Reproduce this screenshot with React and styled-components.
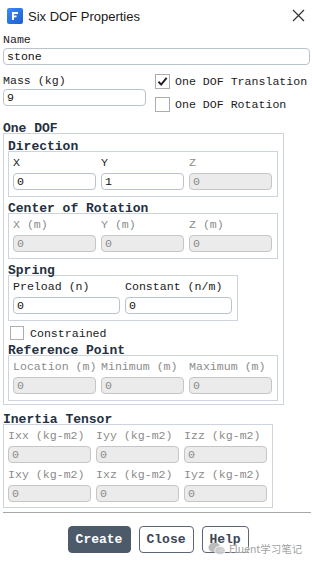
import styled, { createGlobalStyle } from "styled-components";

const Global = createGlobalStyle`
  html, body { margin: 0; padding: 0; background: #fff; }
  body { font-family: "Liberation Mono", "Courier New", monospace; }
`;

const Window = styled.div`
  position: relative;
  width: 312px;
  height: 563px;
  background: #fff;
  overflow: hidden;
`;

const TitleBar = styled.div`
  height: 31px;
  display: flex;
  align-items: center;
  padding: 0 7px;
  gap: 5px;
  box-sizing: border-box;
`;

const Title = styled.div`
  flex: 1;
  font-family: "Liberation Sans", Arial, sans-serif;
  font-size: 13px;
  color: #1a1a1a;
  padding-top: 1px;
`;

const Body = styled.div`
  padding: 1px 1px 0 3px;
`;

const Label = styled.div`
  height: 16px;
  line-height: 16px;
  font-size: 11.6px;
  color: ${(p) => (p.$disabled ? "#8c8c8c" : "#1c1c1c")};
  white-space: nowrap;
`;

const SectionTitle = styled.div`
  height: 11px;
  line-height: 13px;
  font-size: 13px;
  font-weight: bold;
  color: #24303f;
  margin-top: ${(p) => p.$top || 0}px;
  white-space: nowrap;
`;

const Input = styled.input`
  display: block;
  box-sizing: border-box;
  width: ${(p) => (p.$w ? p.$w + "px" : "100%")};
  height: 17px;
  margin: ${(p) => p.$mt || 0}px 0 0;
  padding: 0 3px;
  border: 1px solid ${(p) => (p.disabled ? "#c6c6c6" : "#b9c2ce")};
  border-radius: 4px;
  background: ${(p) => (p.disabled ? "#ebebeb" : "#fff")};
  color: ${(p) => (p.disabled ? "#8c8c8c" : "#111")};
  font-family: "Liberation Mono", monospace;
  font-size: 11.6px;
  outline: none;
`;

const MassRow = styled.div`
  display: flex;
  margin-top: 8px;
`;

const MassCol = styled.div`
  width: 143px;
`;

const Checks = styled.div`
  margin-left: 9px;
  margin-top: -3px;
  display: flex;
  flex-direction: column;
`;

const CheckRow = styled.label`
  display: flex;
  align-items: center;
  height: ${(p) => p.$h || 23}px;
  margin-top: ${(p) => p.$mt || 0}px;
  gap: ${(p) => p.$gap || 5}px;
  font-size: 11.6px;
  color: #1c1c1c;
  white-space: nowrap;
`;

const Box = styled.span`
  width: ${(p) => p.$size}px;
  height: ${(p) => p.$size}px;
  box-sizing: border-box;
  border: 1px solid #adadad;
  background: #fff;
  display: flex;
  align-items: center;
  justify-content: center;
  margin-left: ${(p) => p.$ml || 0}px;
`;

const Group = styled.div`
  box-sizing: border-box;
  width: ${(p) => p.$w}px;
  border: 1px solid #cdd4de;
  padding: ${(p) => p.$pad || "3px 4px 6px 4px"};
`;

const Grid = styled.div`
  display: grid;
  grid-template-columns: repeat(${(p) => p.$cols}, ${(p) => p.$colW}px);
  column-gap: 5px;
`;

const Field = styled.div`
  display: flex;
  flex-direction: column;
  margin-top: ${(p) => p.$mt || 0}px;
`;

const Divider = styled.div`
  height: 1px;
  background: #a8a8a8;
  margin: 4px 0 0 0;
`;

const Buttons = styled.div`
  display: flex;
  justify-content: center;
  gap: 8px;
  margin-top: 13px;
  padding-left: 2px;
`;

const Button = styled.button`
  box-sizing: border-box;
  width: ${(p) => p.$w}px;
  height: 27px;
  border-radius: 4px;
  border: 1px solid ${(p) => (p.$primary ? "#4d5a6a" : "#5b6573")};
  background: ${(p) => (p.$primary ? "#4d5a6a" : "#fff")};
  color: ${(p) => (p.$primary ? "#fff" : "#3c4654")};
  font-family: "Liberation Mono", monospace;
  font-weight: bold;
  font-size: 13px;
  padding: 0;
`;

const Watermark = styled.div`
  position: absolute;
  left: 208px;
  top: 541px;
  display: flex;
  align-items: center;
  gap: 3px;
  white-space: nowrap;
  font-family: "Noto Sans CJK SC", "Noto Sans", sans-serif;
  font-size: 10.5px;
  color: rgba(140, 140, 140, 0.85);
  text-shadow: 0 0 1px #fff, 0 0 2px #fff;
`;

function Check({ checked, size = 15, gap, h, mt, ml, children }) {
  return (
    <CheckRow $gap={gap} $h={h} $mt={mt}>
      <Box $size={size} $ml={ml}>
        {checked && (
          <svg width="11" height="11" viewBox="0 0 11 11">
            <path d="M1.5 5.8 L4.2 8.6 L9.6 1.8" fill="none" stroke="#222" strokeWidth="2" />
          </svg>
        )}
      </Box>
      {children}
    </CheckRow>
  );
}

function FieldGrid({ cols, colW, items, disabled }) {
  const rows = [];
  for (let i = 0; i < items.length; i += cols) rows.push(items.slice(i, i + cols));
  return (
    <>
      {rows.map((row, r) => (
        <Grid key={r} $cols={cols} $colW={colW}>
          {row.map((it) => (
            <Field key={it.label} $mt={r > 0 ? 4 : 0}>
              <Label $disabled={it.disabled ?? disabled}>{it.label}</Label>
              <Input $mt={2} disabled={it.disabled ?? disabled} defaultValue={it.value} readOnly />
            </Field>
          ))}
        </Grid>
      ))}
    </>
  );
}

function Logo() {
  return (
    <svg width="16" height="16" viewBox="0 0 16 16">
      <defs>
        <linearGradient id="lg" x1="0" y1="0" x2="1" y2="1">
          <stop offset="0" stopColor="#3d8af7" />
          <stop offset="1" stopColor="#1a5fd0" />
        </linearGradient>
      </defs>
      <rect x="0" y="0" width="16" height="16" rx="2" fill="url(#lg)" />
      <rect x="5" y="4" width="2" height="8" fill="#fff" />
      <rect x="5" y="4" width="6" height="2" fill="#fff" />
      <rect x="5" y="7.5" width="4.5" height="1.8" fill="#fff" />
    </svg>
  );
}

export default function App() {
  return (
    <Window>
      <Global />
      <TitleBar>
        <Logo />
        <Title>Six DOF Properties</Title>
        <svg width="13" height="13" viewBox="0 0 13 13">
          <path d="M1 1 L12 12 M12 1 L1 12" stroke="#333" strokeWidth="1.2" />
        </svg>
      </TitleBar>
      <Body>
        <Label>Name</Label>
        <Input defaultValue="stone" readOnly $w={307} />
        <MassRow>
          <MassCol>
            <Label>Mass (kg)</Label>
            <Input defaultValue="9" readOnly />
          </MassCol>
          <Checks>
            <Check checked>One DOF Translation</Check>
            <Check>One DOF Rotation</Check>
          </Checks>
        </MassRow>

        <SectionTitle $top={6}>One DOF</SectionTitle>
        <Group $w={281} $pad="0 4px 3px 4px">
          <SectionTitle $top={6}>Direction</SectionTitle>
          <Group $w={270}>
            <FieldGrid
              cols={3}
              colW={83}
              items={[
                { label: "X", value: "0", disabled: false },
                { label: "Y", value: "1", disabled: false },
                { label: "Z", value: "0", disabled: true },
              ]}
            />
          </Group>
          <SectionTitle $top={5}>Center of Rotation</SectionTitle>
          <Group $w={270}>
            <FieldGrid
              cols={3}
              colW={83}
              disabled
              items={[
                { label: "X (m)", value: "0" },
                { label: "Y (m)", value: "0" },
                { label: "Z (m)", value: "0" },
              ]}
            />
          </Group>
          <SectionTitle $top={5}>Spring</SectionTitle>
          <Group $w={230}>
            <FieldGrid
              cols={2}
              colW={107}
              items={[
                { label: "Preload (n)", value: "0", disabled: false },
                { label: "Constant (n/m)", value: "0", disabled: false },
              ]}
            />
          </Group>
          <Check size={14} gap={6} h={22} mt={1} ml={2}>Constrained</Check>
          <SectionTitle>Reference Point</SectionTitle>
          <Group $w={270}>
            <FieldGrid
              cols={3}
              colW={83}
              disabled
              items={[
                { label: "Location (m)", value: "0" },
                { label: "Minimum (m)", value: "0" },
                { label: "Maximum (m)", value: "0" },
              ]}
            />
          </Group>
        </Group>

        <SectionTitle $top={8}>Inertia Tensor</SectionTitle>
        <Group $w={270} $pad="3px 4px 5px 4px">
          <FieldGrid
            cols={3}
            colW={83}
            disabled
            items={[
              { label: "Ixx (kg-m2)", value: "0" },
              { label: "Iyy (kg-m2)", value: "0" },
              { label: "Izz (kg-m2)", value: "0" },
              { label: "Ixy (kg-m2)", value: "0" },
              { label: "Ixz (kg-m2)", value: "0" },
              { label: "Iyz (kg-m2)", value: "0" },
            ]}
          />
        </Group>
        <Divider />
        <Buttons>
          <Button $primary $w={63}>Create</Button>
          <Button $w={55}>Close</Button>
          <Button $w={47}>Help</Button>
        </Buttons>
      </Body>
      <Watermark>
        <svg width="18" height="14" viewBox="0 0 18 14">
          <ellipse cx="6.5" cy="5.5" rx="6" ry="5" fill="rgba(170,170,170,0.8)" />
          <ellipse cx="12" cy="8.5" rx="5.3" ry="4.3" fill="rgba(205,205,205,0.9)" stroke="#fff" strokeWidth="0.8" />
        </svg>
        <span>Fluent学习笔记</span>
      </Watermark>
    </Window>
  );
}
